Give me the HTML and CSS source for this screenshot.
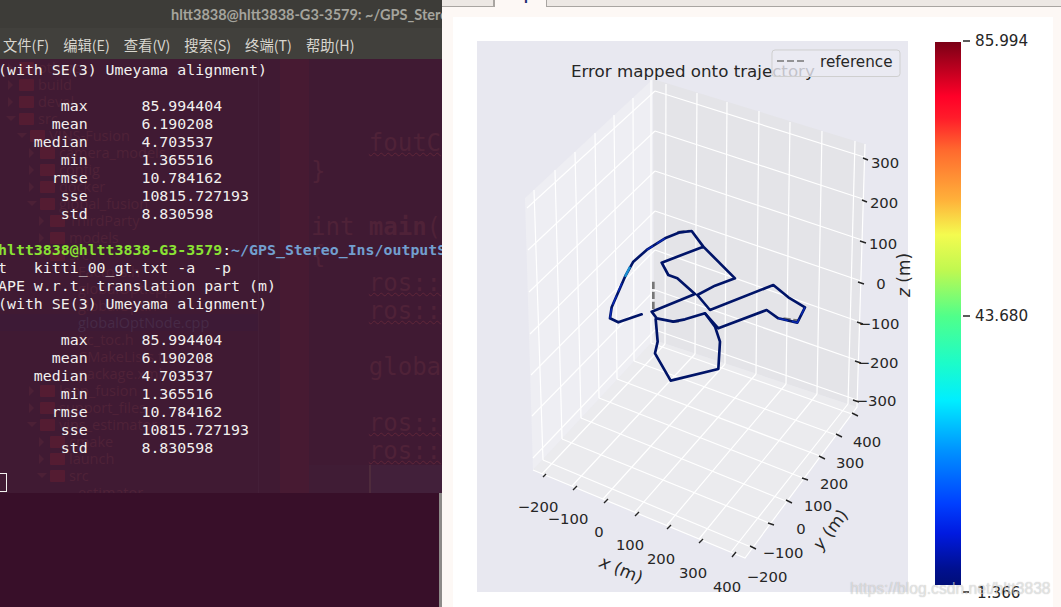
FILE: index.html
```html
<!DOCTYPE html>
<html lang="en">
<head>
  <meta charset="UTF-8">
  <title>APE plot</title>
  <link rel="stylesheet" href="styles.css">
</head>
<body>

<section class="terminal">
  <div class="titlebar"><span class="title">hltt3838@hltt3838-G3-3579: ~/GPS_Stereo_Ins/outputStereo</span></div>
  <nav class="menubar">
    <span>文件(F)</span><span>编辑(E)</span><span>查看(V)</span><span>搜索(S)</span><span>终端(T)</span><span>帮助(H)</span>
  </nav>

  <div class="term-body">
    <!-- editor window showing through the transparent terminal -->
    <div class="ghost">
      <div class="stripe"></div>
      <ul class="tree">
        <li class="row l0"><i class="folder"></i>others</li>
        <li class="row l0"><i class="folder"></i>build</li>
        <li class="row l0"><i class="folder"></i>devel</li>
        <li class="row l0"><i class="folder open"></i>src</li>
        <li class="row l1"><i class="folder open"></i>VINS-Fusion</li>
        <li class="row l2"><i class="folder"></i>camera_models</li>
        <li class="row l2"><i class="folder"></i>config</li>
        <li class="row l2"><i class="folder"></i>docker</li>
        <li class="row l2"><i class="folder open"></i>global_fusion</li>
        <li class="row l3"><i class="folder"></i>ThirdParty</li>
        <li class="row l3"><i class="folder"></i>models</li>
        <li class="row l3"><i class="folder open"></i>src</li>
        <li class="row l4">Factors.h</li>
        <li class="row l4">globalOpt.cpp</li>
        <li class="row l4">globalOpt.h</li>
        <li class="row l4 selected">globalOptNode.cpp</li>
        <li class="row l4">tic_toc.h</li>
        <li class="row l4">CMakeLists.txt</li>
        <li class="row l4">package.xml</li>
        <li class="row l2"><i class="folder"></i>loop_fusion</li>
        <li class="row l2"><i class="folder"></i>support_files</li>
        <li class="row l2"><i class="folder open"></i>vins_estimator</li>
        <li class="row l3"><i class="folder"></i>cmake</li>
        <li class="row l3"><i class="folder"></i>launch</li>
        <li class="row l3"><i class="folder open"></i>src</li>
        <li class="row l4">estimator</li>
      </ul>
      <pre class="code">    <u>foutC</u>
}

int <b>main</b>(
{
    <u>ros::</u>
    <u>ros::</u>

    globa

    <u>ros::</u>
    <u>ros::</u></pre>
      <div class="code-foot"></div>
    </div>

<pre class="term-text">(with SE(3) Umeyama alignment)

       max      85.994404
      mean      6.190208
    median      4.703537
       min      1.365516
      rmse      10.784162
       sse      10815.727193
       std      8.830598

<b class="green">hltt3838@hltt3838-G3-3579</b>:<b class="blue">~/GPS_Stereo_Ins/outputStereo</b>
t   kitti_00_gt.txt -a  -p
APE w.r.t. translation part (m)
(with SE(3) Umeyama alignment)

       max      85.994404
      mean      6.190208
    median      4.703537
       min      1.365516
      rmse      10.784162
       sse      10815.727193
       std      8.830598

<span class="cursor"></span></pre>
  </div>

  <div class="term-rest"></div>
</section>

<section class="plot-window">
  <div class="tabs">
    <div class="tab"></div>
    <div class="tab active"><span class="tab-label">p</span></div>
  </div>

  <div class="plot-area">
    <figure class="figure">
      <svg class="plot" width="600" height="590" viewBox="453 17 600 590">
        <defs>
          <linearGradient id="cmap" x1="0" y1="0" x2="0" y2="1">
            <stop offset="0" stop-color="#7a0016"/>
            <stop offset=".1" stop-color="#ff0028"/>
            <stop offset=".14" stop-color="#ff1c2a"/>
            <stop offset=".2" stop-color="#ff6a2e"/>
            <stop offset=".29" stop-color="#ffb03a"/>
            <stop offset=".355" stop-color="#f4fb4f"/>
            <stop offset=".42" stop-color="#c0f850"/>
            <stop offset=".505" stop-color="#50ff8a"/>
            <stop offset=".59" stop-color="#1dfcc8"/>
            <stop offset=".66" stop-color="#00eeff"/>
            <stop offset=".755" stop-color="#0090ff"/>
            <stop offset=".85" stop-color="#0040ff"/>
            <stop offset=".905" stop-color="#001ae0"/>
            <stop offset=".97" stop-color="#001090"/>
            <stop offset="1" stop-color="#000e78"/>
          </linearGradient>
        </defs>

        <rect class="axes-bg" x="477" y="41" width="431" height="551"/>

        <!-- panes -->
        <polygon class="pane-left" points="525,198 653,79 654,340 533,470"/>
        <polygon class="pane-right" points="653,79 865,144 857,407 654,340"/>
        <polygon class="pane-floor" points="533,470 654,340 857,407 745,558"/>

        <!-- grid: left wall -->
        <g class="grid">
          <path d="M534 190L543 460M555 170L562 439M575 152L581 418M595 133L599 398M614 115L617 379M633 98L634 361M651 80L651 343"/>
          <path d="M655 91L527 208M655 131L528 250M655 171L529 292M655 211L530 334M655 250L531 375M655 290L532 416M655 330L533 458"/>
          <!-- grid: right wall -->
          <path d="M666 84L665 344M697 93L695 354M727 102L725 364M759 111L756 374M790 122L786 384M822 131L817 394M855 141L848 404"/>
          <path d="M655 91L864 157M655 131L863 199M655 171L862 240M655 211L861 281M655 250L860 322M655 290L859 361M655 330L857 400"/>
          <!-- grid: floor -->
          <path d="M542 474L665 344M572 486L695 354M603 499L725 364M635 512L756 374M667 525L786 384M699 539L817 394M731 552L848 404"/>
          <path d="M543 460L751 547M562 439L769 523M581 418L786 501M599 398L803 478M617 379L820 456M634 361L836 435M651 343L852 414"/>
          <!-- pane edges -->
          <path d="M533 470L745 558L857 407L865 144"/>
        </g>

        <g class="ticks">
          <path d="M863 158L868 160M862 200L867 202M860 241L866 243M858 282L864 284M857 322L863 324M855 361L861 363M853 400L859 402"/>
          <path d="M852 413L858 416M836 434L842 437M819 456L825 459M802 478L808 480M786 500L792 503M768 523L774 525M750 546L756 549"/>
          <path d="M543 477L546 474M573 490L577 486M604 503L608 499M635 516L639 512M667 529L671 525M699 543L703 539M732 557L736 552"/>
        </g>

        <!-- trajectory -->
        <g transform="translate(590 220) scale(.3333)">
          <path class="ref" d="M190 185L190 270M262 37L300 33M245 305L270 303M580 296L625 302"/>
          <path class="traj" d="M155 283L85 307L60 295L65 262L105 170L130 125L170 90L225 55L270 37L305 33L340 80L435 175L375 197L322 225L360 270L550 195L595 232L645 262L622 308L565 295L530 270L385 325L345 280L285 298L250 305L200 295L185 275L315 222L262 175L235 165L215 128L340 80"/>
          <path class="traj" d="M197 297L203 365L195 400L242 482L385 447L390 365L375 320L345 280"/>
          <path class="traj-mid" d="M565 295L622 308L645 262M60 295L65 262L95 190M225 55L170 90"/>
          <path class="traj-hi" d="M105 170L120 140"/>
        </g>

        <text class="plot-title" x="571" y="77">Error mapped onto trajectory</text>

        <!-- legend -->
        <rect class="legend" x="772" y="50" width="128" height="26.5" rx="3"/>
        <path class="legend-line" d="M777 61L807 61"/>
        <text class="legend-text" x="820" y="67">reference</text>

        <g class="label mid">
          <text x="885" y="168">300</text>
          <text x="884" y="208">200</text>
          <text x="883" y="249">100</text>
          <text x="881" y="289">0</text>
          <text x="879" y="329">−100</text>
          <text x="878" y="368">−200</text>
          <text x="876" y="406">−300</text>

          <text x="867" y="447">400</text>
          <text x="850" y="468">300</text>
          <text x="834" y="489">200</text>
          <text x="818" y="511">100</text>
          <text x="801" y="534">0</text>
          <text x="783" y="558">−100</text>
          <text x="767" y="582">−200</text>

          <text x="538" y="512">−200</text>
          <text x="568" y="524">−100</text>
          <text x="599" y="537">0</text>
          <text x="630" y="550">100</text>
          <text x="661" y="564">200</text>
          <text x="693" y="578">300</text>
          <text x="727" y="592">400</text>
        </g>

        <g class="axis-label mid">
          <text transform="translate(619 575) rotate(23)"><tspan class="ital">x</tspan> (m)</text>
          <text transform="translate(835 533) rotate(-53)"><tspan class="ital">y</tspan> (m)</text>
          <text transform="translate(910 275) rotate(-90)"><tspan class="ital">z</tspan> (m)</text>
        </g>

        <!-- colorbar -->
        <rect x="935" y="42" width="26" height="543" fill="url(#cmap)"/>
        <path class="cb-tick" d="M963 41L970 41M963 316L970 316M963 592L969 592"/>
        <g class="cb-label">
          <text x="975" y="46">85.994</text>
          <text x="975" y="321">43.680</text>
          <text x="977" y="598">1.366</text>
        </g>
      </svg>
    </figure>
  </div>
</section>

<div class="watermark">https://blog.csdn.net/hltt3838</div>

</body>
</html>
```

FILE: styles.css
```css
* { box-sizing: border-box; margin: 0; padding: 0; }
html, body { height: 607px; overflow: hidden; }
body { display: flex; background: #380f29; }

/* ——— terminal ——— */
.terminal {
  width: 442px;
  height: 607px;
  flex: none;
  display: flex;
  flex-direction: column;
}
.titlebar {
  height: 28px;
  flex: none;
  padding-left: 171px;
  background: #3d3c38;
  overflow: hidden;
  white-space: nowrap;
}
.title {
  font: 700 14.5px/29px Lato, sans-serif;
  color: #a5a49d;
}
.menubar {
  height: 31px;
  flex: none;
  display: flex;
  gap: 14px;
  padding-left: 3px;
  background: #41403c;
  font: 14.3px/34px "Noto Sans CJK SC", "Noto Sans", sans-serif;
  color: #d8d6cf;
}
.term-body {
  height: 434px;
  flex: none;
  position: relative;
  overflow: hidden;
  background: #401a33;
}
.term-text {
  position: relative;
  margin: 2px 0 0 -2px;
  font: 14.9px/18px "DejaVu Sans Mono", monospace;
  color: #f2f0ee;
  white-space: pre;
}
.green { color: #8ae234; }
.blue { color: #729fcf; }
.cursor {
  display: inline-block;
  width: 9px;
  height: 19px;
  margin-top: -2px;
  vertical-align: top;
  border: 1px solid #f2f0ee;
}
.term-rest {
  flex: 1;
  background: #380f29;
  border-right: 3px solid #8d8a88;
}

/* ——— what shows through ——— */
.ghost { position: absolute; inset: 0; color: #4f2238; }
.stripe {
  position: absolute;
  top: 0; bottom: 0;
  left: 280px;
  width: 29px;
  background: #471a32;
}
.tree {
  position: absolute;
  top: 0; left: 0;
  width: 259px;
  height: 100%;
  list-style: none;
  font: 14.5px/17px "Open Sans", sans-serif;
  border-right: 1px solid #441f38;
}
.row { height: 17px; display: flex; align-items: center; white-space: nowrap; }
.folder {
  position: relative;
  width: 15px;
  height: 12px;
  margin-right: 4px;
  background: #541c32;
  border-radius: 1px;
}
.folder::before {
  content: "";
  position: absolute;
  left: -11px;
  top: 1px;
  border: 5px solid transparent;
  border-left-color: #4c2036;
  border-right-width: 0;
}
.folder.open::before {
  left: -13px;
  top: 3px;
  border: 5px solid transparent;
  border-top-color: #4c2036;
  border-bottom-width: 0;
}
.l0 { padding-left: 19px; }
.l1 { padding-left: 30px; }
.l2 { padding-left: 40px; }
.l3 { padding-left: 50px; }
.l4 { padding-left: 78px; }
.selected { background: #3d1a36; color: #472a47; }
.code {
  position: absolute;
  top: 70px;
  left: 311px;
  font: 24px/28px "DejaVu Sans Mono", monospace;
  color: #4f2238;
}
.code u { text-decoration: underline wavy #5e2538 1px; }
.code-foot {
  position: absolute;
  top: 406px; bottom: 0;
  left: 309px; right: 0;
  background: #42203a;
  border-left: 60px solid #401c35;
}
.code-foot::before {
  content: "";
  position: absolute;
  top: 0; bottom: 0;
  left: 0;
  width: 2px;
  background: #4e2b3c;
}

/* ——— plot window ——— */
.plot-window {
  flex: 1;
  display: flex;
  flex-direction: column;
  background: #fdf8f5;
}
.tabs {
  height: 7px;
  flex: none;
  display: flex;
  padding-left: 51px;
  background: #ede8e4;
  border-bottom: 1px solid #a9a5a1;
}
.tab { width: 0; border-left: 1px solid #a9a5a1; }
.tab.active {
  width: 53px;
  height: 7px;
  background: #fdf8f5;
  border-right: 1px solid #a9a5a1;
  overflow: hidden;
  text-align: center;
}
.tab-label {
  display: block;
  margin-top: -12px;
  padding-left: 15px;
  font: 700 13px/14px "Noto Sans", sans-serif;
  color: #1c2a6e;
}
.plot-area { flex: 1; padding: 10px 8px 0 11px; }
.figure { height: 590px; background: #fff; }
.plot { display: block; }

/* matplotlib bits */
.axes-bg { fill: #e8e8f0; }
.pane-left { fill: #eeeef3; }
.pane-right { fill: #e4e4e8; }
.pane-floor { fill: #ebebee; }
.grid path { fill: none; stroke: #fff; stroke-width: 1.2; }
.ticks path, .cb-tick { fill: none; stroke: #262626; stroke-width: 1.4; }
.traj { fill: none; stroke: #001468; stroke-width: 8; stroke-linejoin: round; stroke-linecap: round; }
.traj-mid { fill: none; stroke: #0a2ab8; stroke-width: 4; stroke-linejoin: round; stroke-dasharray: 30 12; }
.traj-hi { fill: none; stroke: #1a8fd0; stroke-width: 7; }
.ref { fill: none; stroke: #777; stroke-width: 8; stroke-dasharray: 22 8; }
.legend { fill: rgba(234, 234, 242, .8); stroke: #cfcfcf; stroke-width: 1; }
.legend-line { fill: none; stroke: #777; stroke-width: 1.6; stroke-dasharray: 7 3; }
.plot-title { font: 16.7px "DejaVu Sans", sans-serif; fill: #262626; }
.legend-text { font: 15.2px "DejaVu Sans", sans-serif; fill: #262626; }
.label { font: 14.8px "DejaVu Sans", sans-serif; fill: #262626; }
.mid { text-anchor: middle; }
.axis-label { font: 17px "DejaVu Sans", sans-serif; fill: #262626; }
.ital { font-style: italic; }
.cb-label { font: 15.2px "DejaVu Sans", sans-serif; fill: #262626; }

/* image-host stamp over the lower right corner */
.watermark {
  position: absolute;
  left: 850px;
  top: 578px;
  font: 15.7px/22px "Liberation Sans", sans-serif;
  color: rgba(255, 255, 255, .55);
  text-shadow: 0 0 1px rgba(0, 0, 0, .3);
  white-space: nowrap;
}
```
